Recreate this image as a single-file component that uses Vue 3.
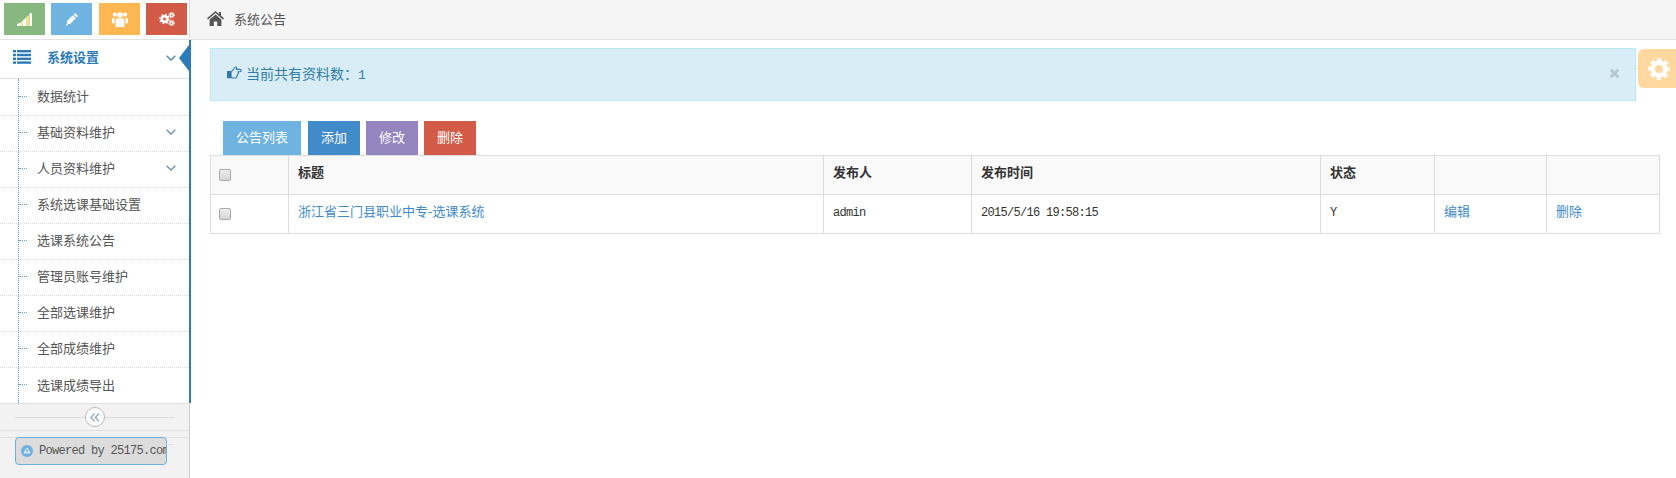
<script setup>
const menu = [
  { t: '数据统计' },
  { t: '基础资料维护', sub: true },
  { t: '人员资料维护', sub: true },
  { t: '系统选课基础设置' },
  { t: '选课系统公告' },
  { t: '管理员账号维护' },
  { t: '全部选课维护' },
  { t: '全部成绩维护' },
  { t: '选课成绩导出' },
]
</script>

<template>
  <div class="page">
    <header class="top">
      <div class="shortcuts">
        <a class="sc green">
          <svg width="15" height="13" viewBox="0 0 15 13">
            <path d="M0 13v-2l3-1v3z" fill="#fff" />
            <path d="M3 13V9.500l3-1.500v5z" fill="#f4e9a8" />
            <path d="M6 13V7l3-2v8z" fill="#fff" />
            <path d="M9 13V4l3-2v11z" fill="#f4e08a" />
            <rect x="12.500" y="0" width="2.500" height="13" fill="#fff" />
          </svg>
        </a>
        <a class="sc blue">
          <svg width="14" height="14" viewBox="0 0 14 14">
            <path d="M10 1l3 3-1.400 1.400-3-3zM7.800 3.200l3 3L5 12H2v-3z" fill="#fff" />
            <path d="M1 12h3l-3 1.500z" fill="#fff" />
          </svg>
        </a>
        <a class="sc orange">
          <svg width="16" height="15" viewBox="0 0 16 15" fill="#fff">
            <circle cx="2.800" cy="2.600" r="2.100" />
            <circle cx="13.200" cy="2.600" r="2.100" />
            <circle cx="8" cy="3" r="2.800" />
            <path d="M0 6.200h2.900c-.3.900-.4 2-.4 5H0zM13.100 6.200H16v5h-2.500c0-3-.1-4.100-.4-5z" />
            <path d="M4.200 6.600h7.600c.5 1 .7 2.400.7 4.400v4h-9v-4c0-2 .2-3.400.7-4.400z" />
          </svg>
        </a>
        <a class="sc red">
          <svg width="16" height="14" viewBox="0 0 16 14" fill="none" stroke="#fff">
            <circle cx="5.500" cy="7" r="2.800" stroke-width="2.600" />
            <circle cx="5.500" cy="7" r="4.600" stroke-width="1.400" stroke-dasharray="1.800 1.800" />
            <circle cx="12.600" cy="3" r="1.600" stroke-width="1.500" />
            <circle cx="12.600" cy="3" r="2.900" stroke-width="1" stroke-dasharray="1.200 1.200" />
            <circle cx="12.600" cy="11" r="1.600" stroke-width="1.500" />
            <circle cx="12.600" cy="11" r="2.900" stroke-width="1" stroke-dasharray="1.200 1.200" />
          </svg>
        </a>
      </div>
      <div class="crumb">
        <svg class="home" width="17" height="15" viewBox="0 0 17 15">
          <path d="M8.500 0L0 7.200l1 1.200 7.500-6.300L16 8.400l1-1.200-3-2.600V1h-2v1.900z" fill="#555" />
          <path d="M8.500 3.400L2.600 8.400V15h4.200v-4.400h3.400V15h4.200V8.400z" fill="#555" />
        </svg>
        <span class="crumb-text">系统公告</span>
      </div>
    </header>

    <div class="body">
      <aside class="side">
        <div class="nav">
          <div class="nav-head">
            <svg class="list" width="18" height="14" viewBox="0 0 18 14" fill="#2b7ab9">
              <rect x="0" y="0" width="3" height="2.400" />
              <rect x="4" y="0" width="14" height="2.400" />
              <rect x="0" y="3.800" width="3" height="2.400" />
              <rect x="4" y="3.800" width="14" height="2.400" />
              <rect x="0" y="7.600" width="3" height="2.400" />
              <rect x="4" y="7.600" width="14" height="2.400" />
              <rect x="0" y="11.400" width="3" height="2.400" />
              <rect x="4" y="11.400" width="14" height="2.400" />
            </svg>
            <span class="nav-title">系统设置</span>
            <svg class="chev" width="10" height="6" viewBox="0 0 10 6"><path d="M.7.7L5 5l4.300-4.300" fill="none" stroke="#4a82b4" stroke-width="1.300" /></svg>
            <i class="notch"></i>
          </div>
          <ul class="items">
            <li v-for="m in menu" :key="m.t" class="item">
              <span>{{ m.t }}</span>
              <svg v-if="m.sub" class="chev" width="10" height="6" viewBox="0 0 10 6"><path d="M.7.7L5 5l4.300-4.300" fill="none" stroke="#6b8fae" stroke-width="1.300" /></svg>
            </li>
          </ul>
        </div>
        <div class="foot">
          <div class="collapse">
            <span class="round">
              <svg width="10" height="9" viewBox="0 0 10 9" fill="none" stroke="#8fa6bd" stroke-width="1.200"><path d="M4.500.5L.8 4.500l3.700 4M9 .5L5.300 4.500 9 8.500" /></svg>
            </span>
          </div>
          <div class="powered">
            <i class="pw-ico">
              <svg width="12" height="12" viewBox="0 0 12 12"><circle cx="6" cy="6" r="6" fill="#6cb0e2" /><path d="M6 3L3 8h6z" fill="none" stroke="#e8eef4" stroke-width="1" /><path d="M3 7h6" stroke="#e8eef4" /></svg>
            </i>
            <span>Powered by 25175.com</span>
          </div>
        </div>
      </aside>

      <main class="main">
        <div class="alert">
          <svg class="thumb" width="15" height="13" viewBox="0 0 15 13" fill="none" stroke="#2b7ab0" stroke-width="1.100">
            <path d="M.6 5.600h3v6h-3z" fill="#2b7ab0" />
            <path d="M4 5.500C5.500 5 6.500 3.500 7.200 2.200 7.600 1.400 8 1 8.800 1c1 0 1 1.200.6 2.400H13c1.600 0 1.600 2.400 0 2.400h-1.800c.4 1.200 0 2.200-.6 2.400.2 1-.2 1.800-.9 2 .1 1.200-.5 1.800-1.500 1.800H6.400c-1 0-1.600-.6-2.400-.6z" />
          </svg>
          <span class="alert-text">当前共有资料数：<b>1</b></span>
          <svg class="close" width="11" height="11" viewBox="0 0 11 11"><path d="M1.700 1.700l7.600 7.600M9.300 1.700l-7.600 7.600" stroke="#b9c6cf" stroke-width="3" /></svg>
        </div>

        <div class="tabs">
          <a class="tab sky wide">公告列表</a>
          <a class="tab azure">添加</a>
          <a class="tab purple">修改</a>
          <a class="tab brick">删除</a>
        </div>

        <table class="grid">
          <colgroup>
            <col class="c1" /><col class="c2" /><col class="c3" /><col class="c4" /><col class="c5" /><col class="c6" /><col class="c7" />
          </colgroup>
          <thead>
            <tr>
              <th><input type="checkbox" class="cb" /></th>
              <th>标题</th>
              <th>发布人</th>
              <th>发布时间</th>
              <th>状态</th>
              <th></th>
              <th></th>
            </tr>
          </thead>
          <tbody>
            <tr>
              <td><input type="checkbox" class="cb" /></td>
              <td><a>浙江省三门县职业中专-选课系统</a></td>
              <td>admin</td>
              <td>2015/5/16 19:58:15</td>
              <td>Y</td>
              <td><a>编辑</a></td>
              <td><a>删除</a></td>
            </tr>
          </tbody>
        </table>

        <div class="gear-tab">
          <svg width="22" height="22" viewBox="0 0 22 22">
            <circle cx="11" cy="11" r="6.200" fill="none" stroke="#fff" stroke-width="4.400" />
            <circle cx="11" cy="11" r="9" fill="none" stroke="#fff" stroke-width="3.600" stroke-dasharray="4.070 3" stroke-dashoffset="2" />
          </svg>
        </div>
      </main>
    </div>
  </div>
</template>

<style>
html, body { margin: 0; background: #fff; }
</style>

<style scoped>
.page {
  width: 1676px;
  height: 478px;
  overflow: hidden;
  display: flex;
  flex-direction: column;
  font-family: "Noto Sans CJK SC", "Liberation Sans", sans-serif;
  font-size: 13px;
  color: #555;
}
.top {
  height: 39px;
  border-bottom: 1px solid #e2e2e2;
  display: flex;
  background: #f5f5f5;
  flex: none;
}
.shortcuts {
  background: #fff;
  border-right: 1px solid #ddd;
  display: flex;
  gap: 6px;
  padding: 3px 0 0 4px;
  box-sizing: border-box;
  width: 190px;
}
.sc {
  width: 41px;
  height: 32px;
  display: flex;
  align-items: center;
  justify-content: center;
}
.sc:nth-child(3) { margin-left: 1px; }
.green { background: #87b87f; }
.blue { background: #6fb3e0; }
.orange { background: #ffb752; }
.red { background: #d15b47; }
.crumb {
  display: flex;
  align-items: center;
  padding-left: 17px;
  font-size: 13px;
  color: #555;
  gap: 10px;
}
.crumb-text { margin-top: -2px; }
.home { margin-top: -3px; }
.body {
  flex: 1;
  display: flex;
  min-height: 0;
}
.side {
  width: 190px;
  flex: none;
  display: flex;
  flex-direction: column;
}
.nav {
  border-right: 2px solid #2b7ab9;
  box-sizing: border-box;
  margin-right: -1px;
  position: relative;
  z-index: 2;
  height: 363px;
  width: 191px;
  flex: none;
}
.nav-head {
  height: 39px;
  box-sizing: border-box;
  border-bottom: 1px solid #e2e2e2;
  display: flex;
  align-items: center;
  padding: 0 13px 6px 13px;
  position: relative;
}
.nav-title {
  margin-left: 16px;
  font-weight: 700;
  color: #2b7ab9;
  flex: 1;
}
.list { display: block; margin-top: 2px; }
.chev { display: block; }
.nav-head .chev { margin-top: 4px; }
.notch {
  position: absolute;
  right: 0;
  top: 5px;
  width: 0;
  height: 0;
  border-top: 13px solid transparent;
  border-bottom: 13px solid transparent;
  border-right: 10px solid #2b7ab9;
}
.items {
  list-style: none;
  margin: 0;
  padding: 1px 0 0;
  box-sizing: border-box;
  position: relative;
  height: 324px;
  overflow: hidden;
}
.items::before {
  content: "";
  position: absolute;
  left: 18px;
  top: 0;
  bottom: 0;
  border-left: 1px dotted #5a9fd0;
}
.item {
  height: 36px;
  box-sizing: border-box;
  border-bottom: 1px dotted #d8d8d8;
  display: flex;
  align-items: center;
  justify-content: space-between;
  padding: 0 13px 3px 37px;
  position: relative;
  line-height: 20px;
  color: #555;
}
.item:last-child { border-bottom: 0; }
.item::before {
  content: "";
  position: absolute;
  left: 19px;
  top: 16px;
  width: 8px;
  border-top: 1px dotted #5a9fd0;
}
.foot {
  flex: 1;
  background: #f2f2f2;
  border-right: 1px solid #ccc;
  position: relative;
}
.collapse {
  height: 26px;
  border-top: 1px solid #e0e0e0;
  border-bottom: 1px solid #e0e0e0;
  position: relative;
  display: flex;
  align-items: center;
  justify-content: center;
}
.collapse::before {
  content: "";
  position: absolute;
  left: 15px;
  right: 15px;
  top: 13px;
  border-top: 1px solid #ddd;
}
.round {
  position: relative;
  width: 18px;
  height: 18px;
  border: 1px solid #bbb;
  border-radius: 50%;
  background: #fff;
  display: flex;
  align-items: center;
  justify-content: center;
}
.powered {
  box-sizing: border-box;
  position: absolute;
  left: 15px;
  top: 34px;
  width: 152px;
  height: 28px;
  background: #dcdcdc;
  border: 1px solid #6cb0e2;
  border-radius: 4px;
  display: flex;
  align-items: center;
  padding-left: 5px;
  gap: 6px;
  white-space: nowrap;
  overflow: hidden;
  font-family: "Liberation Mono", monospace;
  font-size: 12px;
  letter-spacing: -0.7px;
  color: #555;
}
.pw-ico { display: flex; }
.foot::before {
  content: "";
  position: absolute;
  left: 0;
  right: 0;
  top: 34px;
  border-top: 1px solid #e0e0e0;
}
.foot::after {
  content: "";
  position: absolute;
  left: 160px;
  width: 14px;
  top: 41px;
  border-top: 1px solid #ddd;
}
.main {
  flex: 1;
  position: relative;
  padding: 8px 16px 0 20px;
  min-width: 0;
}
.alert {
  width: 1426px;
  height: 53px;
  box-sizing: border-box;
  background: #d9edf7;
  border: 1px solid #bce8f1;
  display: flex;
  align-items: center;
  padding: 0 15px 0 16px;
  color: #31708f;
  font-size: 14px;
}
.alert-text { flex: 1; margin-left: 4px; margin-top: -4px; color: #2f7da8; }
.alert-text b { font-family: "Liberation Mono", monospace; font-weight: 400; font-size: 13px; }
.thumb { display: block; margin-top: -4px; }
.close { display: block; margin-top: -2px; }
.tabs {
  display: flex;
  gap: 6px;
  margin: 20px 0 0 13px;
}
.tab {
  height: 34px;
  width: 52px;
  box-sizing: border-box;
  padding-bottom: 3px;
  display: flex;
  align-items: center;
  justify-content: center;
  color: #fff;
  font-size: 13px;
}
.wide { width: 78px; margin-right: 1px; }
.sky { background: #6fb3e0; }
.azure { background: #428bca; }
.purple { background: #9585bf; }
.brick { background: #d15b47; }
.grid {
  width: 1449px;
  table-layout: fixed;
  border-collapse: collapse;
  color: #333;
}
.c1 { width: 78px; }
.c2 { width: 535px; }
.c3 { width: 148px; }
.c4 { width: 349px; }
.c5 { width: 114px; }
.c6 { width: 112px; }
.c7 { width: 113px; }
th, td {
  border: 1px solid #ddd;
  box-sizing: content-box;
  padding: 6px 8px 0 9px;
  height: 32px;
  text-align: left;
  vertical-align: top;
  line-height: 20px;
}
th { background: #f9f9f9; font-weight: 700; color: #333; }
td {
  padding-top: 8px;
  height: 30px;
  font-family: "Liberation Mono", "Noto Sans CJK SC", monospace;
  font-size: 12px;
  letter-spacing: -0.7px;
}
td a {
  display: block;
  margin-top: -2px;
  letter-spacing: 0;
  color: #428bca;
  font-family: "Noto Sans CJK SC", sans-serif;
  font-size: 13px;
}
.cb {
  appearance: none;
  -webkit-appearance: none;
  display: block;
  width: 12px;
  height: 12px;
  margin: 7px 0 0 -1px;
  border: 1px solid #aaa;
  border-radius: 2px;
  background: linear-gradient(#eee, #d5d5d5);
}
td .cb { margin-top: 5px; }
.gear-tab {
  position: absolute;
  right: 0;
  top: 9px;
  width: 38px;
  height: 39px;
  box-sizing: border-box;
  padding-left: 3px;
  background: #ffd8a0;
  border-radius: 6px 0 0 6px;
  display: flex;
  align-items: center;
  justify-content: center;
}
.gear-tab::before {
  content: "";
  position: absolute;
  left: -2px;
  top: 19px;
  width: 2px;
  border-top: 1px dotted #ffd8a0;
}
</style>
